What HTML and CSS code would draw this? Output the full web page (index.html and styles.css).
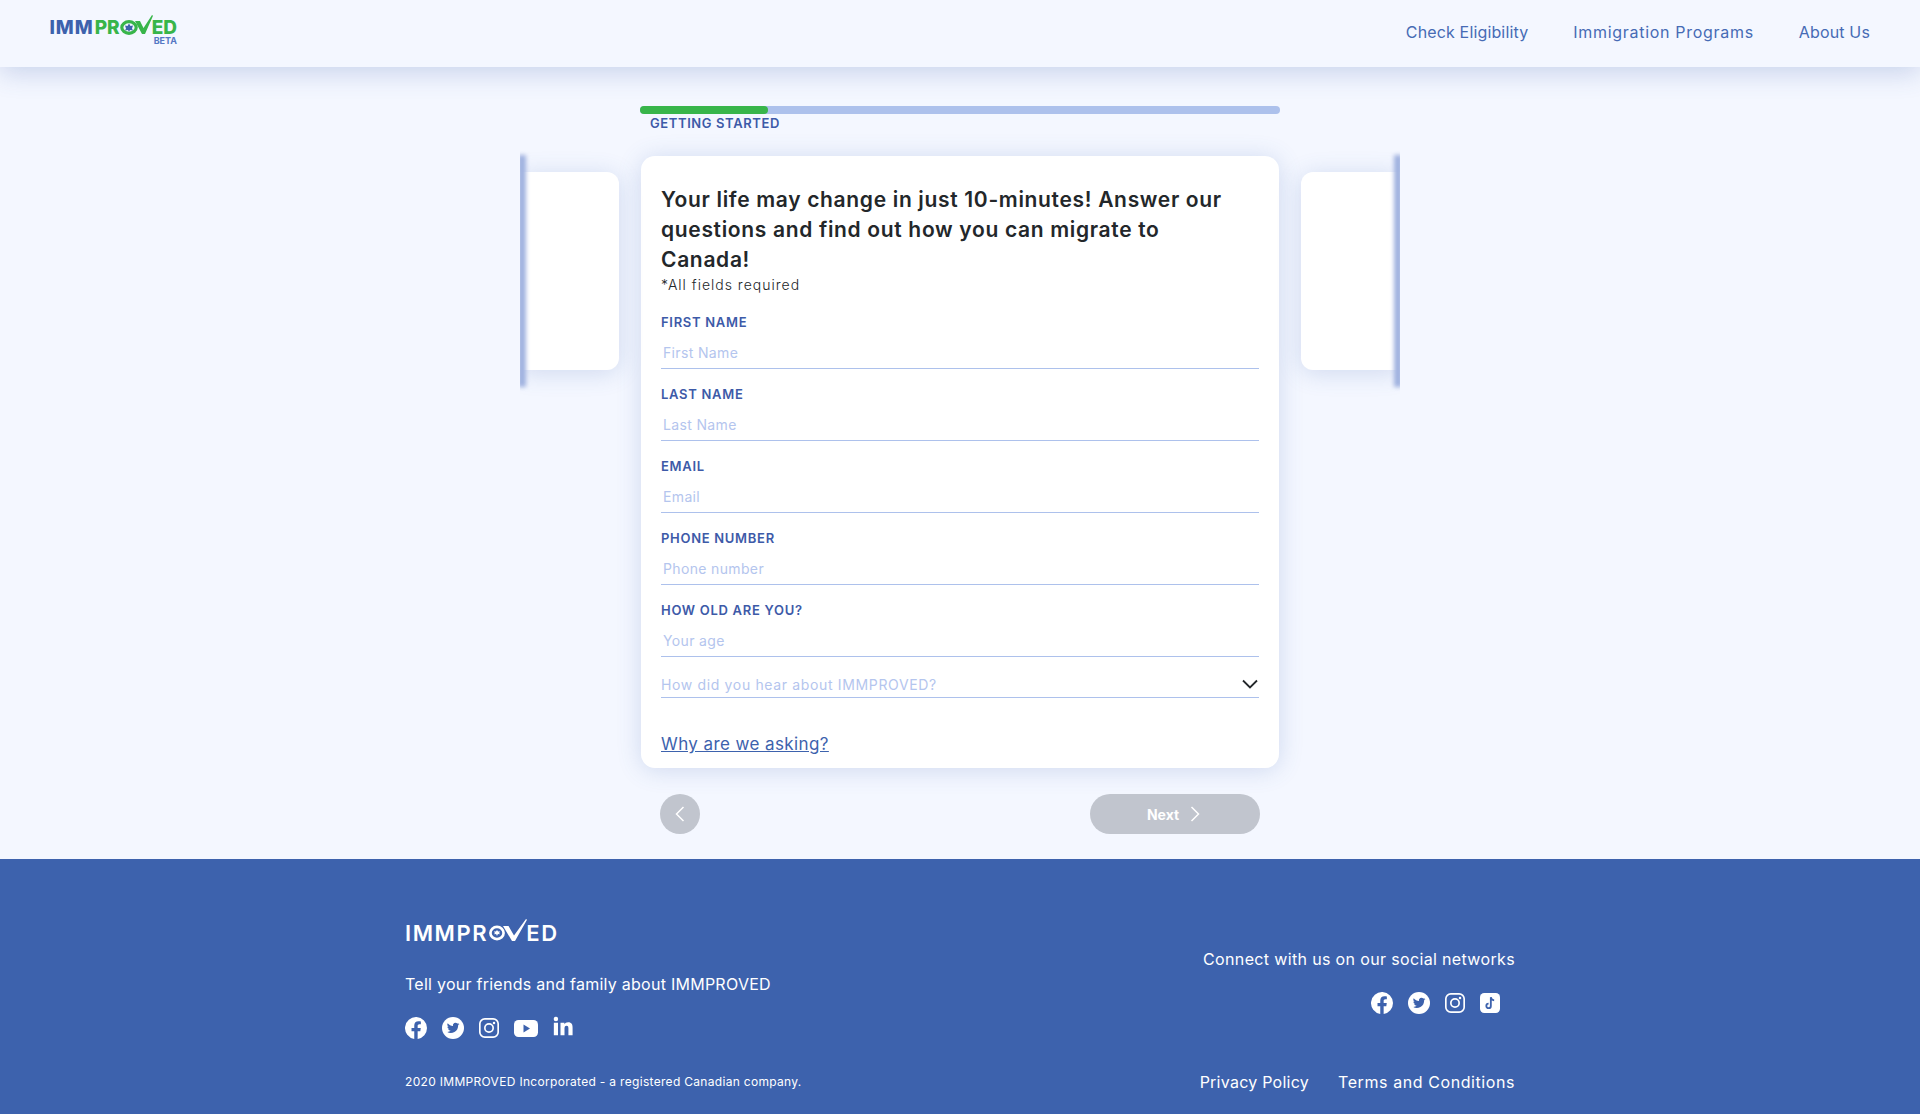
FILE: index.html
```html
<!DOCTYPE html>
<html lang="en">
<head>
  <meta charset="UTF-8">
  <meta name="viewport" content="width=device-width, initial-scale=1.0">
  <title>IMMPROVED</title>
  <link rel="stylesheet" href="styles.css">
</head>
<body>
  <header class="site-header">
    <a href="#" class="logo">
      <span class="logo-word"><span class="logo-imm">IMM</span><span class="logo-rest">PR</span><svg class="logo-o" viewBox="0 0 18 15" width="18" height="15"><ellipse cx="9" cy="7.500" rx="7.200" ry="5.800" fill="none" stroke="#38b54a" stroke-width="3.200"/><path d="M9 3.500l1.500 2.500 2.500-.5-1 3 1 2-3-.5-1 2-1-2-3 .5 1-2-1-3 2.500.5z" fill="#3d62ad"/></svg><svg class="logo-v" viewBox="0 0 18 19" width="18" height="19"><path d="M0 6h5l3.500 7L17 0l1 .7L10 19H7z" fill="#38b54a"/></svg><span class="logo-rest">ED</span></span>
      <span class="logo-beta">BETA</span>
    </a>
    <nav class="main-nav">
      <a href="#">Check Eligibility</a>
      <a href="#" class="nav-wide">Immigration Programs</a>
      <a href="#">About Us</a>
    </nav>
  </header>

  <main class="quiz">
    <div class="progress">
      <div class="progress-track"><div class="progress-fill"></div></div>
      <div class="progress-label">GETTING STARTED</div>
    </div>

    <div class="stage">
      <div class="peek peek-left"></div>
      <section class="form-card">
        <h2>Your life may change in just 10-minutes! Answer our questions and find out how you can migrate to Canada!</h2>
        <p class="required-note">*All fields required</p>
        <form action="javascript:void(0);">
          <div class="form-group">
            <label for="first">FIRST NAME</label>
            <input type="text" id="first" placeholder="First Name">
          </div>
          <div class="form-group">
            <label for="last">LAST NAME</label>
            <input type="text" id="last" placeholder="Last Name">
          </div>
          <div class="form-group">
            <label for="email">EMAIL</label>
            <input type="email" id="email" placeholder="Email">
          </div>
          <div class="form-group">
            <label for="phone">PHONE NUMBER</label>
            <input type="text" id="phone" placeholder="Phone number">
          </div>
          <div class="form-group">
            <label for="age">HOW OLD ARE YOU?</label>
            <input type="text" id="age" placeholder="Your age">
          </div>
          <div class="select-row">
            <span>How did you hear about IMMPROVED?</span>
            <svg viewBox="0 0 16 10" width="16" height="10"><path d="M1 1.500l7 7 7-7" fill="none" stroke="#23272a" stroke-width="1.800"/></svg>
          </div>
          <a href="#" class="why-link">Why are we asking?</a>
        </form>
      </section>
      <div class="peek peek-right"></div>
    </div>

    <div class="quiz-buttons">
      <button class="back-btn" type="button"><svg viewBox="0 0 10 16" width="10" height="16"><path d="M8.500 1L1.500 8l7 7" fill="none" stroke="#fff" stroke-width="1.500"/></svg></button>
      <button class="next-btn" type="button">Next <svg viewBox="0 0 10 16" width="10" height="16"><path d="M1.500 1l7 7-7 7" fill="none" stroke="#fff" stroke-width="1.500"/></svg></button>
    </div>
  </main>

  <footer class="site-footer">
    <div class="footer-col">
      <div class="footer-logo"><span>IMMPR</span><svg class="footer-o" viewBox="0 0 18 17" width="16" height="16"><ellipse cx="9" cy="8.500" rx="7.400" ry="6.900" fill="none" stroke="#fff" stroke-width="3"/><path d="M9 5l1.200 1.800 2-.3-.7 2 .7 1.500-2.200-.3L9 12l-1-2.300-2.200.3.700-1.500-.7-2 2 .3z" fill="#fff"/></svg><svg class="footer-v" viewBox="0 0 24 22" width="24" height="22"><path d="M0 7h5.500l5.500 9.500L23 0l1 .8L12 22H9z" fill="#fff"/></svg><span>ED</span></div>
      <p class="footer-tell">Tell your friends and family about IMMPROVED</p>
      <div class="social social-left">
        <svg viewBox="0 0 24 24" width="22" height="22"><path fill="#fff" d="M24 12a12 12 0 1 0-13.900 11.900v-8.400H7.100V12h3V9.400c0-3 1.800-4.700 4.500-4.700 1.300 0 2.700.2 2.700.2v3h-1.500c-1.500 0-2 .9-2 1.900V12h3.400l-.5 3.500h-2.900v8.400A12 12 0 0 0 24 12z"/></svg>
        <svg viewBox="0 0 24 24" width="22" height="22"><circle cx="12" cy="12" r="12" fill="#fff"/><path fill="#3d62ad" d="M19 7.600c-.5.2-1 .4-1.600.4.600-.3 1-.9 1.200-1.500-.5.300-1.100.6-1.800.7a2.800 2.800 0 0 0-4.800 2.600C9.700 9.700 7.600 8.600 6.200 6.900c-.8 1.300-.4 2.900.9 3.700-.4 0-.9-.1-1.300-.3 0 1.300 1 2.500 2.300 2.800-.4.100-.9.100-1.300 0 .4 1.100 1.400 1.900 2.700 1.900a5.700 5.700 0 0 1-4.200 1.200 8 8 0 0 0 12.300-7.100c.6-.4 1-.9 1.400-1.500z"/></svg>
        <svg viewBox="0 0 24 24" width="20" height="20"><rect x="1" y="1" width="22" height="22" rx="6" fill="none" stroke="#fff" stroke-width="2"/><circle cx="12" cy="12" r="5" fill="none" stroke="#fff" stroke-width="2"/><circle cx="18" cy="6" r="1.500" fill="#fff"/></svg>
        <svg viewBox="0 0 24 17" width="24" height="17"><rect width="24" height="17" rx="4.500" fill="#fff"/><path d="M9.500 4.500l6.500 4-6.500 4z" fill="#3d62ad"/></svg>
        <svg class="icon-linkedin" viewBox="0 0 24 24" width="20" height="20"><path fill="#fff" d="M1 8h5v15H1zM3.500 1a2.700 2.700 0 1 1 0 5.400 2.700 2.700 0 0 1 0-5.400zM9 8h4.700v2c.8-1.400 2.300-2.400 4.500-2.400 4.300 0 5.300 2.800 5.300 6.500V23h-5v-7.900c0-1.900-.3-3.300-2.200-3.300-2 0-2.500 1.500-2.500 3.300V23H9z"/></svg>
      </div>
      <p class="footer-copy">2020 IMMPROVED Incorporated - a registered Canadian company.</p>
    </div>
    <div class="footer-col footer-right">
      <p class="footer-connect">Connect with us on our social networks</p>
      <div class="social social-right">
        <svg viewBox="0 0 24 24" width="22" height="22"><path fill="#fff" d="M24 12a12 12 0 1 0-13.900 11.900v-8.400H7.100V12h3V9.400c0-3 1.800-4.700 4.500-4.700 1.300 0 2.700.2 2.700.2v3h-1.500c-1.500 0-2 .9-2 1.900V12h3.400l-.5 3.500h-2.900v8.400A12 12 0 0 0 24 12z"/></svg>
        <svg viewBox="0 0 24 24" width="22" height="22"><circle cx="12" cy="12" r="12" fill="#fff"/><path fill="#3d62ad" d="M19 7.600c-.5.2-1 .4-1.600.4.600-.3 1-.9 1.200-1.500-.5.300-1.100.6-1.800.7a2.800 2.800 0 0 0-4.800 2.600C9.700 9.700 7.600 8.600 6.200 6.900c-.8 1.300-.4 2.900.9 3.700-.4 0-.9-.1-1.300-.3 0 1.300 1 2.500 2.300 2.800-.4.100-.9.100-1.300 0 .4 1.100 1.400 1.900 2.700 1.900a5.700 5.700 0 0 1-4.200 1.200 8 8 0 0 0 12.300-7.100c.6-.4 1-.9 1.400-1.500z"/></svg>
        <svg viewBox="0 0 24 24" width="20" height="20"><rect x="1" y="1" width="22" height="22" rx="6" fill="none" stroke="#fff" stroke-width="2"/><circle cx="12" cy="12" r="5" fill="none" stroke="#fff" stroke-width="2"/><circle cx="18" cy="6" r="1.500" fill="#fff"/></svg>
        <svg viewBox="0 0 24 24" width="20" height="20"><rect width="24" height="24" rx="5" fill="#fff"/><path d="M13 5v10.500a2.700 2.700 0 1 1-2.700-2.700M13 5c.3 2.200 1.700 3.600 4 3.800" fill="none" stroke="#3d62ad" stroke-width="2.200"/></svg>
      </div>
      <div class="footer-links">
        <a href="#">Privacy Policy</a>
        <a href="#" class="link-terms">Terms and Conditions</a>
      </div>
    </div>
  </footer>
</body>
</html>
```

FILE: styles.css
```css
body {
  font-family: 'Inter', 'Open Sans', sans-serif;
  background-color: #F4F7FF;
  color: #23272A;
  margin: 0;
  padding: 0;
}
a {
  color: inherit;
  text-decoration: none;
}

/* header */
.site-header {
  height: 67px;
  display: flex;
  justify-content: space-between;
  align-items: center;
  padding: 0 50px 0 49px;
  background: #F4F7FF;
  box-shadow: 0 6px 26px rgba(61,98,173,0.24);
  position: relative;
}
.logo {
  display: flex;
  flex-direction: column;
  align-items: flex-end;
  width: 128px;
  margin-bottom: 3px;
  font-weight: 800;
}
.logo-word {
  display: flex;
  align-items: center;
  height: 14px;
  font-size: 19px;
  line-height: 14px;
  white-space: nowrap;
}
.logo-imm {
  color: #3D62AD;
  margin-right: 1px;
  letter-spacing: 1px;
}
.logo-rest {
  color: #38B54A;
}
.logo-v {
  margin: -6px -1px 0 -3px;
}
.logo-beta {
  margin-top: 2px;
  font-size: 9px;
  line-height: 7px;
  font-weight: 700;
  color: #5577C4;
}
.main-nav {
  display: flex;
  gap: 45px;
  padding-bottom: 3px;
  font-size: 16px;
  letter-spacing: 0.15px;
  color: #466BB5;
}
.nav-wide {
  letter-spacing: 0.7px;
}

/* quiz */
.quiz {
  height: 792px;
  padding-top: 39px;
  box-sizing: border-box;
}
.progress {
  width: 640px;
  margin: 0 auto;
  height: 50px;
}
.progress-track {
  height: 8px;
  border-radius: 4px;
  background: #ADC1EC;
}
.progress-fill {
  width: 128px;
  height: 8px;
  border-radius: 4px;
  background: #38B54A;
}
.progress-label {
  padding-left: 10px;
  font-size: 13px;
  font-weight: 600;
  line-height: 18px;
  letter-spacing: 0.6px;
  color: #3D5AA8;
}
.stage {
  display: flex;
  justify-content: center;
  align-items: flex-start;
  gap: 22px;
}
.peek {
  width: 99px;
  height: 198px;
  margin-top: 16px;
  position: relative;
  background: #fff;
  box-shadow: 0 3px 24px rgba(61,98,173,0.2);
}
.peek-left {
  border-radius: 0 12px 12px 0;
  clip-path: inset(-40px -40px -40px 0);
}
.peek-right {
  border-radius: 12px 0 0 12px;
  clip-path: inset(-40px 0 -40px -40px);
}
.peek::after {
  content: "";
  position: absolute;
  top: -17px;
  bottom: -17px;
  width: 8px;
  background: #9FB1DF;
  filter: blur(2px);
}
.peek-left::after {
  left: -2px;
}
.peek-right::after {
  right: -2px;
}
.form-card {
  width: 638px;
  height: 612px;
  box-sizing: border-box;
  padding: 29px 20px 0 20px;
  background: #fff;
  border-radius: 14px;
  box-shadow: 0 2px 24px rgba(61,98,173,0.2);
}
.form-card h2 {
  max-width: 575px;
  margin: 0;
  font-size: 21px;
  font-weight: 600;
  line-height: 30px;
  letter-spacing: 0.67px;
  color: #23272A;
}
.required-note {
  margin: 0 0 18px 0;
  font-size: 14px;
  font-weight: 300;
  line-height: 20px;
  letter-spacing: 1px;
}
.form-group {
  margin-bottom: 16px;
}
.form-group label {
  display: block;
  font-size: 13px;
  font-weight: 600;
  line-height: 18px;
  letter-spacing: 0.7px;
  color: #3D5AA8;
}
.form-group input {
  display: block;
  width: 100%;
  box-sizing: border-box;
  height: 38px;
  padding: 6px 2px 0 2px;
  border: 0;
  border-bottom: 1px solid #ADC1EC;
  outline: none;
  background: transparent;
  font-family: inherit;
  font-size: 14px;
  letter-spacing: 0.35px;
}
.form-group input::placeholder {
  color: #B4C5EE;
}
.select-row {
  display: flex;
  justify-content: space-between;
  align-items: center;
  height: 41px;
  margin-top: -16px;
  padding: 14px 1px 0 0;
  box-sizing: border-box;
  border-bottom: 1px solid #ADC1EC;
  font-size: 14px;
  letter-spacing: 0.65px;
  color: #B4C5EE;
}
.why-link {
  display: inline-block;
  margin-top: 36px;
  font-size: 17px;
  letter-spacing: 0.4px;
  color: #3D62AD;
  text-decoration: underline;
}
.quiz-buttons {
  width: 600px;
  margin: 26px auto 0 auto;
  display: flex;
  justify-content: space-between;
}
.back-btn, .next-btn {
  height: 40px;
  border: 0;
  border-radius: 20px;
  background: #C1C5CE;
  color: #fff;
  font-family: inherit;
  font-size: 14px;
  font-weight: 700;
  display: flex;
  align-items: center;
  justify-content: center;
  gap: 11px;
  padding: 0;
}
.back-btn {
  width: 40px;
}
.next-btn {
  width: 170px;
  padding-right: 3px;
}

/* footer */
.site-footer {
  height: 255px;
  box-sizing: border-box;
  padding: 66px 405px 0 405px;
  background: #3D62AD;
  color: #fff;
  display: flex;
  justify-content: space-between;
}
.footer-logo {
  display: flex;
  align-items: center;
  height: 16px;
  font-size: 22px;
  font-weight: 600;
  letter-spacing: 1.6px;
  white-space: nowrap;
}
.footer-o {
  margin-left: 1px;
}
.footer-v {
  margin: -6px -1px 0 -2px;
}
.footer-tell {
  margin: 31px 0 0 0;
  font-size: 16px;
  line-height: 24px;
  letter-spacing: 0.26px;
}
.social {
  display: flex;
  align-items: center;
  gap: 15px;
  height: 24px;
}
.social-left {
  margin-top: 20px;
}
.icon-linkedin {
  margin-top: -4px;
}
.social-right {
  justify-content: flex-end;
  height: 22px;
  margin: 21px 15px 0 0;
}
.footer-copy {
  margin: 33px 0 0 0;
  font-size: 12px;
  line-height: 18px;
  letter-spacing: 0.31px;
}
.footer-connect {
  margin: 0;
  padding-top: 22px;
  font-size: 16px;
  line-height: 24px;
  letter-spacing: 0.35px;
  text-align: right;
}
.footer-links {
  display: flex;
  justify-content: flex-end;
  gap: 29px;
  margin-top: 56px;
  font-size: 16px;
  line-height: 24px;
  letter-spacing: 0.25px;
}
.link-terms {
  letter-spacing: 0.58px;
}
```
